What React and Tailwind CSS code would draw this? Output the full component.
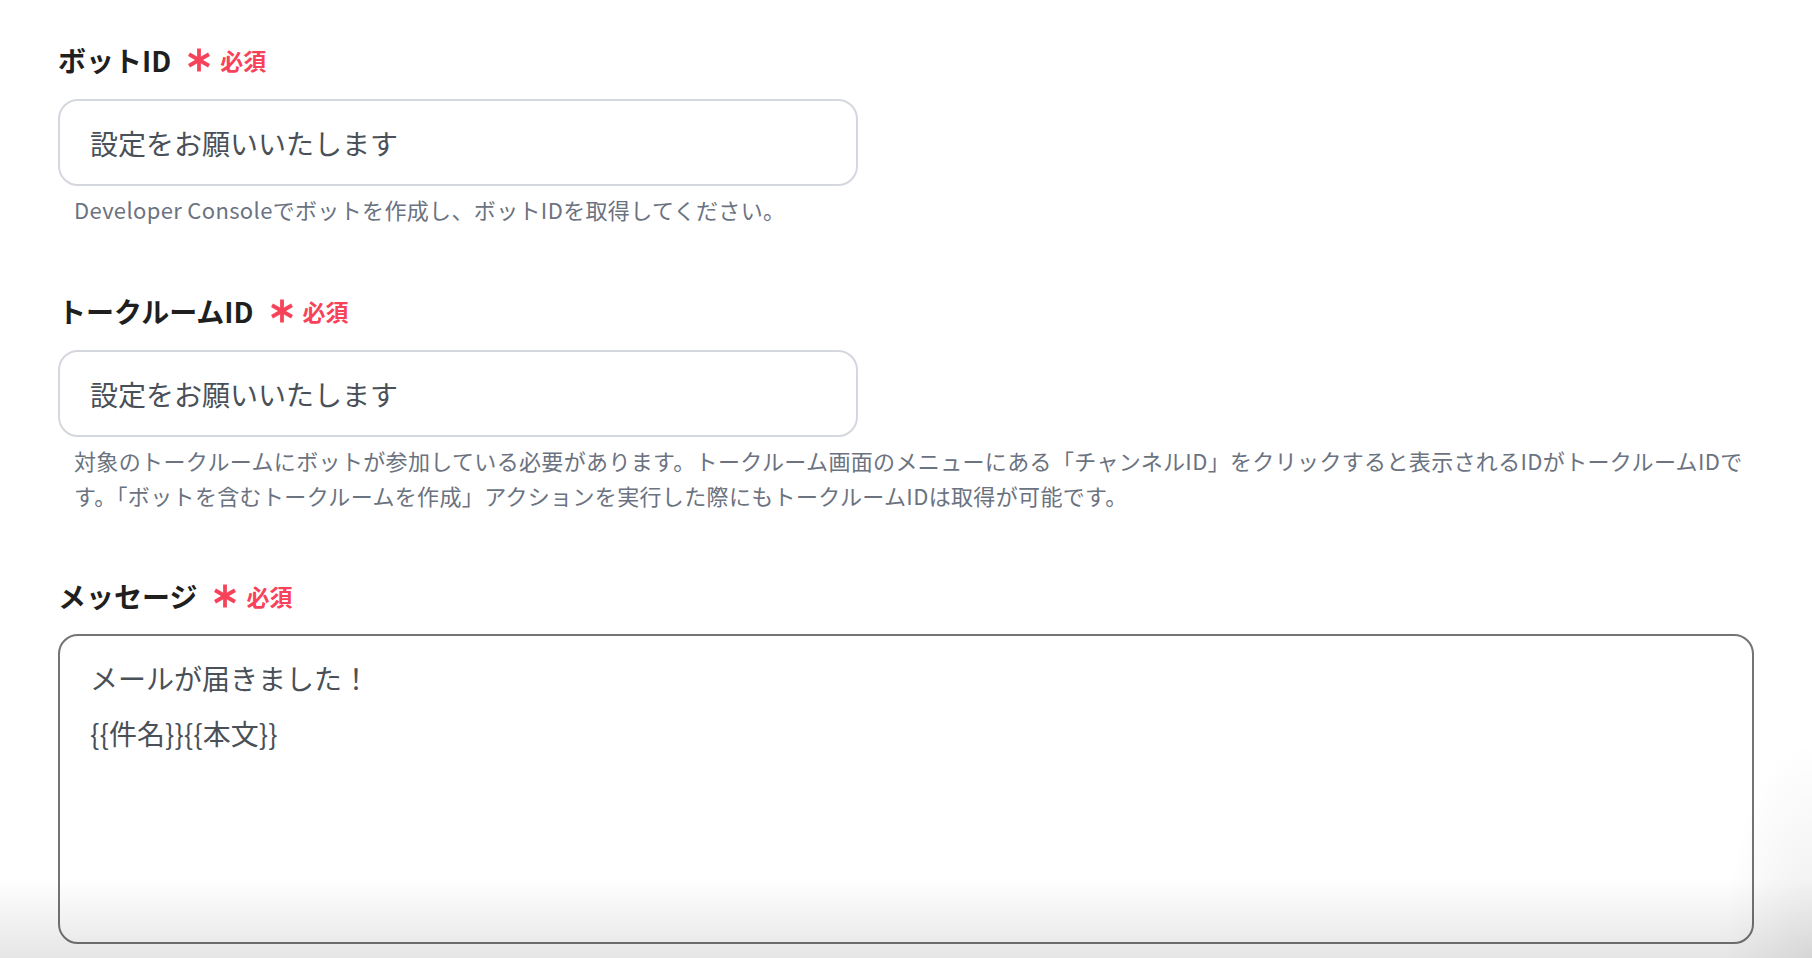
import React from "react";

function Asterisk({ className }) {
  return (
    <svg viewBox="0 0 24 24" className={className} fill="none" stroke="#f7435a" strokeWidth="3.8" strokeLinecap="butt">
      <path d="M12 0.5V23.5" />
      <path d="M2 6.25L22 17.75" />
      <path d="M2 17.75L22 6.25" />
    </svg>
  );
}

function Label({ text }) {
  return (
    <div className="flex items-center h-[40px]">
      <span className="text-[28px] leading-[40px] font-bold text-[#1f1f1f]">{text}</span>
      <Asterisk className="ml-[16px] w-[24px] h-[24px]" />
      <span className="ml-[9px] text-[23px] leading-[40px] font-bold text-[#f7435a]">必須</span>
    </div>
  );
}

function InputBox({ value }) {
  return (
    <div className="mt-[19px] flex h-[87px] w-[800px] items-center rounded-[20px] border-2 border-[#d4d8de] bg-white pl-[30px] text-[28px] text-[#4a5058]">
      {value}
    </div>
  );
}

export default function App() {
  return (
    <div className="relative h-[958px] w-full overflow-hidden bg-white font-['Noto_Sans_CJK_JP','Noto_Sans',sans-serif]">
      <div className="flex flex-col px-[58px] pt-[40px]">
        <section className="flex flex-col">
          <Label text="ボットID" />
          <InputBox value="設定をお願いいたします" />
          <p className="mt-[6px] pl-[16px] text-[22px] leading-[35px] tracking-[0.35px] text-[#6b7280]">
            Developer Consoleでボットを作成し、ボットIDを取得してください。
          </p>
        </section>

        <section className="mt-[64px] flex flex-col">
          <Label text="トークルームID" />
          <InputBox value="設定をお願いいたします" />
          <p className="mt-[6px] pl-[16px] text-[22px] leading-[35px] tracking-[0.35px] text-[#6b7280]">
            対象のトークルームにボットが参加している必要があります。トークルーム画面のメニューにある「チャンネルID」をクリックすると表示されるIDがトークルームIDです。「ボットを含むトークルームを作成」アクションを実行した際にもトークルームIDは取得が可能です。
          </p>
        </section>

        <section className="mt-[63px] flex flex-col">
          <Label text="メッセージ" />
          <div className="mt-[18px] h-[310px] w-full rounded-[20px] border-2 border-[#747474] bg-white pl-[30px] pt-[22px] text-[28px] text-[#4a5058]">
            <p className="leading-[40px]">メールが届きました！</p>
            <p className="mt-[15px] leading-[40px]">{"{{件名}}{{本文}}"}</p>
          </div>
        </section>
      </div>

      <div className="pointer-events-none absolute bottom-0 left-0 h-[80px] w-full bg-gradient-to-b from-transparent to-black/10" />
      <div className="pointer-events-none absolute bottom-0 right-0 h-[220px] w-[90px] bg-[radial-gradient(ellipse_at_bottom_right,rgba(0,0,0,0.07),transparent_70%)]" />
    </div>
  );
}
